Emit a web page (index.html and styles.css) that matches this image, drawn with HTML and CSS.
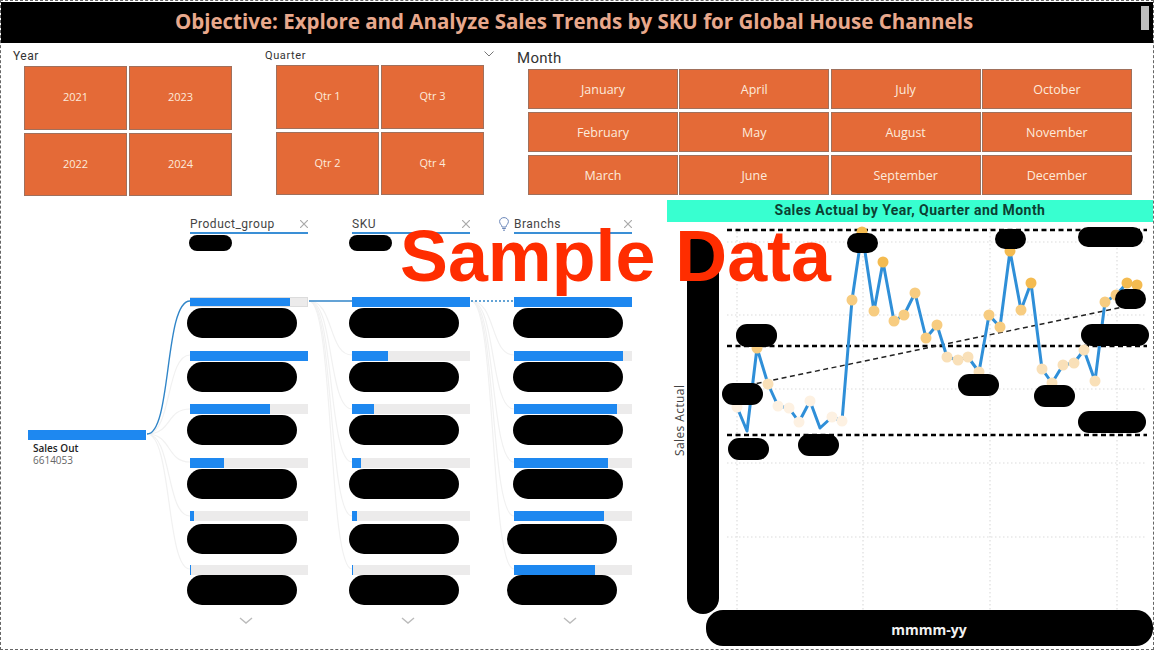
FILE: index.html
```html
<!DOCTYPE html>
<html lang="en">
<head>
<meta charset="UTF-8">
<meta name="viewport" content="width=device-width, initial-scale=1.0">
<title>Sales Trends by SKU</title>
<link rel="stylesheet" href="styles.css">
</head>
<body>
    <div class="report">
        <div class="header">
            <h1>Objective: Explore and Analyze Sales Trends by SKU for Global House Channels</h1>
            <div class="scrollThumb"></div>
        </div>

        <div class="slicers">
            <div class="slicer slicerYear">
                <div class="slicerLabel">Year</div>
                <div class="tiles tilesSquare">
                    <div class="tile">2021</div>
                    <div class="tile">2023</div>
                    <div class="tile">2022</div>
                    <div class="tile">2024</div>
                </div>
            </div>
            <div class="slicer slicerQuarter">
                <div class="slicerLabel">
                    Quarter
                    <svg class="labelChevron" width="10" height="6" viewBox="0 0 10 6"><path d="M0.5 0.5 L5 5 L9.5 0.5"/></svg>
                </div>
                <div class="tiles tilesSquare">
                    <div class="tile">Qtr 1</div>
                    <div class="tile">Qtr 3</div>
                    <div class="tile">Qtr 2</div>
                    <div class="tile">Qtr 4</div>
                </div>
            </div>
            <div class="slicer slicerMonth">
                <div class="slicerLabel">Month</div>
                <div class="tiles tilesMonth">
                    <div class="tile">January</div>
                    <div class="tile">April</div>
                    <div class="tile">July</div>
                    <div class="tile">October</div>
                    <div class="tile">February</div>
                    <div class="tile">May</div>
                    <div class="tile">August</div>
                    <div class="tile">November</div>
                    <div class="tile">March</div>
                    <div class="tile">June</div>
                    <div class="tile">September</div>
                    <div class="tile">December</div>
                </div>
            </div>
        </div>

        <div class="lower">
            <div class="tree">
                <svg class="links" width="666" height="449" viewBox="1 200 666 449">
                    <path class="linkFaint" d="M147 434 C172 434 166 355 190 355"/>
                    <path class="linkFaint" d="M147 434 C172 434 166 409 190 409"/>
                    <path class="linkFaint" d="M147 434 C172 434 166 462 190 462"/>
                    <path class="linkFaint" d="M147 434 C172 434 166 516 190 516"/>
                    <path class="linkFaint" d="M147 434 C172 434 166 569 190 569"/>
                    <path class="linkFaint" d="M309 301 C334 301 328 355 352 355"/>
                    <path class="linkFaint" d="M309 301 C334 301 328 409 352 409"/>
                    <path class="linkFaint" d="M309 301 C334 301 328 462 352 462"/>
                    <path class="linkFaint" d="M309 301 C334 301 328 516 352 516"/>
                    <path class="linkFaint" d="M309 301 C334 301 328 569 352 569"/>
                    <path class="linkFaint" d="M471 301 C496 301 490 355 514 355"/>
                    <path class="linkFaint" d="M471 301 C496 301 490 409 514 409"/>
                    <path class="linkFaint" d="M471 301 C496 301 490 462 514 462"/>
                    <path class="linkFaint" d="M471 301 C496 301 490 516 514 516"/>
                    <path class="linkFaint" d="M471 301 C496 301 490 569 514 569"/>
                    <path class="linkActive" d="M147 434 C172 434 164 301 190 301"/>
                    <path class="linkActive" d="M309 301 L352 301"/>
                    <path class="linkDotted" d="M471 301 L514 301"/>
                </svg>

                <div class="rootNode">
                    <div class="bar"><div class="fill" style="width: 100%"></div></div>
                    <div class="rootName">Sales Out</div>
                    <div class="rootValue">6614053</div>
                </div>

                <div class="level">
                    <div class="levelHead">
                        <span>Product_group</span>
                        <svg class="close" width="8" height="8" viewBox="0 0 8 8"><path d="M0 0 L8 8 M8 0 L0 8"/></svg>
                    </div>
                    <div class="blot blotHead"></div>
                    <div class="nodes">
                        <div class="node"><div class="bar barPicked"><div class="fill" style="width: 86%"></div></div><div class="blot"></div></div>
                        <div class="node"><div class="bar"><div class="fill" style="width: 100%"></div></div><div class="blot"></div></div>
                        <div class="node"><div class="bar"><div class="fill" style="width: 68%"></div></div><div class="blot"></div></div>
                        <div class="node"><div class="bar"><div class="fill" style="width: 29%"></div></div><div class="blot"></div></div>
                        <div class="node"><div class="bar"><div class="fill" style="width: 3%"></div></div><div class="blot blotLow"></div></div>
                        <div class="node"><div class="bar"><div class="fill" style="width: 1%"></div></div><div class="blot blotHigh"></div></div>
                    </div>
                    <svg class="more" width="14" height="7" viewBox="0 0 14 7"><path d="M1 1 L7 6 L13 1"/></svg>
                </div>

                <div class="level">
                    <div class="levelHead">
                        <span>SKU</span>
                        <svg class="close" width="8" height="8" viewBox="0 0 8 8"><path d="M0 0 L8 8 M8 0 L0 8"/></svg>
                    </div>
                    <div class="blot blotHead"></div>
                    <div class="nodes">
                        <div class="node"><div class="bar"><div class="fill" style="width: 100%"></div></div><div class="blot"></div></div>
                        <div class="node"><div class="bar"><div class="fill" style="width: 31%"></div></div><div class="blot"></div></div>
                        <div class="node"><div class="bar"><div class="fill" style="width: 19%"></div></div><div class="blot"></div></div>
                        <div class="node"><div class="bar"><div class="fill" style="width: 8%"></div></div><div class="blot"></div></div>
                        <div class="node"><div class="bar"><div class="fill" style="width: 4%"></div></div><div class="blot blotLow"></div></div>
                        <div class="node"><div class="bar"><div class="fill" style="width: 1%"></div></div><div class="blot blotHigh"></div></div>
                    </div>
                    <svg class="more" width="14" height="7" viewBox="0 0 14 7"><path d="M1 1 L7 6 L13 1"/></svg>
                </div>

                <div class="level levelBranch">
                    <div class="levelHead">
                        <svg class="bulb" width="10" height="14" viewBox="0 0 10 14"><path d="M3 10 C3 8 0.6 7 0.6 4.5 C0.6 2.2 2.6 0.6 5 0.6 C7.4 0.6 9.4 2.2 9.4 4.5 C9.4 7 7 8 7 10 Z M3.2 11.5 L6.8 11.5 M4 13.2 L6 13.2"/></svg>
                        <span>Branchs</span>
                        <svg class="close" width="8" height="8" viewBox="0 0 8 8"><path d="M0 0 L8 8 M8 0 L0 8"/></svg>
                    </div>
                    <div class="blot blotHead blotHidden"></div>
                    <div class="nodes">
                        <div class="node"><div class="bar"><div class="fill" style="width: 100%"></div></div><div class="blot"></div></div>
                        <div class="node"><div class="bar"><div class="fill" style="width: 92.5%"></div></div><div class="blot"></div></div>
                        <div class="node"><div class="bar"><div class="fill" style="width: 88%"></div></div><div class="blot"></div></div>
                        <div class="node"><div class="bar"><div class="fill" style="width: 80%"></div></div><div class="blot"></div></div>
                        <div class="node"><div class="bar"><div class="fill" style="width: 76.5%"></div></div><div class="blot blotLow blotLeft"></div></div>
                        <div class="node"><div class="bar"><div class="fill" style="width: 69%"></div></div><div class="blot blotHigh blotLeft"></div></div>
                    </div>
                    <svg class="more" width="14" height="7" viewBox="0 0 14 7"><path d="M1 1 L7 6 L13 1"/></svg>
                </div>
            </div>

            <div class="chart">
                <h2>Sales Actual by Year, Quarter and Month</h2>
                <svg class="plot" width="486" height="427" viewBox="667 222 486 427">
                    <path class="grid" d="M727 242 H1147 M727 315 H1147 M727 389 H1147 M727 463 H1147 M727 537 H1147"/>
                    <path class="grid" d="M737 228 V610 M863 228 V610 M990 228 V610 M1117 228 V610"/>

                    <path class="refLine" d="M727 230 H1147 M727 346 H1147 M727 435 H1147"/>
                    <path class="trend" d="M740 387 L1147 302"/>

                    <polyline class="series" points="737,407 747,431 757,348 768,384 778,406 789,408 799,422 810,401 820,428 832,417 842,421 852,300 862,232 874,311 883,262 894,321 904,315 915,293 926,338 937,325 947,357 958,360 968,357 979,372 989,315 1000,327 1010,251 1021,310 1031,283 1042,369 1052,383 1063,365 1074,363 1084,350 1095,381 1105,302 1116,295 1127,283 1137,285"/>

                    <g class="dotsLow">
                        <circle cx="737" cy="407" r="5.5"/><circle cx="778" cy="406" r="5.5"/><circle cx="789" cy="408" r="5.5"/><circle cx="799" cy="422" r="5.5"/><circle cx="810" cy="401" r="5.5"/><circle cx="832" cy="417" r="5.5"/><circle cx="842" cy="421" r="5.5"/>
                    </g>
                    <g class="dotsPale">
                        <circle cx="768" cy="384" r="5.5"/><circle cx="947" cy="357" r="5.5"/><circle cx="958" cy="360" r="5.5"/><circle cx="968" cy="357" r="5.5"/><circle cx="979" cy="372" r="5.5"/><circle cx="1042" cy="369" r="5.5"/><circle cx="1052" cy="383" r="5.5"/><circle cx="1063" cy="365" r="5.5"/><circle cx="1074" cy="363" r="5.5"/><circle cx="1084" cy="350" r="5.5"/><circle cx="1095" cy="381" r="5.5"/>
                    </g>
                    <g class="dotsMid">
                        <circle cx="852" cy="300" r="5.5"/><circle cx="874" cy="311" r="5.5"/><circle cx="894" cy="321" r="5.5"/><circle cx="904" cy="315" r="5.5"/><circle cx="915" cy="293" r="5.5"/><circle cx="926" cy="338" r="5.5"/><circle cx="937" cy="325" r="5.5"/><circle cx="989" cy="315" r="5.5"/><circle cx="1000" cy="327" r="5.5"/><circle cx="1021" cy="310" r="5.5"/><circle cx="1105" cy="302" r="5.5"/><circle cx="1116" cy="295" r="5.5"/><circle cx="757" cy="348" r="5.5"/>
                    </g>
                    <g class="dotsHigh">
                        <circle cx="862" cy="232" r="5.5"/><circle cx="883" cy="262" r="5.5"/><circle cx="1010" cy="251" r="5.5"/><circle cx="1031" cy="283" r="5.5"/><circle cx="1127" cy="283" r="5.5"/><circle cx="1137" cy="285" r="5.5"/>
                    </g>

                    <text class="axisTitle" transform="translate(684 456) rotate(-90)">Sales Actual</text>

                    <g class="redacted">
                        <rect x="687" y="233" width="32" height="381" rx="16"/>
                        <rect x="706" y="610" width="447" height="36" rx="17"/>
                        <rect x="736" y="324" width="41" height="23" rx="11"/>
                        <rect x="722" y="383" width="41" height="22" rx="11"/>
                        <rect x="847" y="233" width="31" height="20" rx="10"/>
                        <rect x="995" y="229" width="31" height="20" rx="10"/>
                        <rect x="1078" y="227" width="65" height="20" rx="10"/>
                        <rect x="1115" y="289" width="31" height="20" rx="10"/>
                        <rect x="1081" y="324" width="68" height="22" rx="11"/>
                        <rect x="958" y="374" width="41" height="22" rx="11"/>
                        <rect x="1034" y="385" width="41" height="22" rx="11"/>
                        <rect x="1078" y="411" width="68" height="22" rx="11"/>
                        <rect x="728" y="438" width="41" height="22" rx="11"/>
                        <rect x="798" y="434" width="41" height="22" rx="11"/>
                    </g>

                    <text class="axisName" x="929" y="635">mmmm-yy</text>
                </svg>
            </div>
        </div>

        <div class="watermark">Sample Data</div>
    </div>
</body>
</html>
```

FILE: styles.css
```css
body {
    font-family: "Open Sans", sans-serif;
    background-color: #fff;
    margin: 0;
    padding: 0;
}

.report {
    position: relative;
    box-sizing: border-box;
    width: 1154px;
    height: 650px;
    padding-top: 1px;
    border: 1px dashed #666;
    overflow: hidden;
}

/* header */
.header {
    position: relative;
    box-sizing: border-box;
    height: 41px;
    padding: 0 6px 4px 0;
    background-color: #000;
    display: flex;
    align-items: center;
    justify-content: center;
}

h1 {
    margin: 0;
    font-size: 20.5px;
    font-weight: 700;
    color: #e8a88c;
}

.scrollThumb {
    position: absolute;
    left: 1140px;
    top: 4px;
    width: 8px;
    height: 24px;
    background-color: #bdbdbd;
}

/* slicers */
.slicers {
    display: flex;
    height: 157px;
}

.slicerLabel {
    font-family: Roboto, sans-serif;
    color: #333;
    display: flex;
    justify-content: space-between;
    align-items: center;
}

.slicerYear {
    width: 219px;
    margin-left: 12px;
    padding-top: 6px;
}

.slicerYear .slicerLabel {
    height: 14px;
    margin-bottom: 3px;
    font-size: 12px;
    letter-spacing: 0.5px;
}

.slicerQuarter {
    width: 229px;
    margin-left: 33px;
    padding-top: 5px;
}

.slicerQuarter .slicerLabel {
    height: 14px;
    margin-bottom: 3px;
    font-size: 11px;
    letter-spacing: 0.6px;
}

.labelChevron {
    margin-top: -3px;
}

.labelChevron path {
    fill: none;
    stroke: #777;
    stroke-width: 1;
}

.slicerMonth {
    margin-left: 23px;
    padding-top: 7px;
}

.slicerMonth .slicerLabel {
    height: 16px;
    margin-bottom: 3px;
    font-size: 15px;
    letter-spacing: 0.3px;
}

.tiles {
    display: grid;
    margin-left: 11px;
}

.tilesSquare {
    grid-template-columns: 103px 103px;
    grid-auto-rows: 63.5px;
    column-gap: 2px;
    row-gap: 3px;
}

.tilesMonth {
    grid-template-columns: repeat(4, 150px);
    grid-auto-rows: 39.5px;
    column-gap: 1.3px;
    row-gap: 3.5px;
}

.tile {
    box-sizing: border-box;
    background-color: #e46a37;
    border: 1px solid #a0705c;
    color: #fdeadc;
    font-size: 11px;
    padding-bottom: 2px;
    display: flex;
    align-items: center;
    justify-content: center;
}

.tilesMonth .tile {
    font-size: 12.5px;
    padding: 2px 0 0;
}

/* decomposition tree */
.lower {
    display: flex;
    height: 448px;
}

.tree {
    position: relative;
    display: flex;
    gap: 44.5px;
    width: 666px;
    flex-shrink: 0;
    box-sizing: border-box;
    padding-left: 27px;
}

.links {
    position: absolute;
    left: 0;
    top: 0;
}

.linkFaint {
    fill: none;
    stroke: #f1f1f1;
    stroke-width: 1.2;
}

.linkActive {
    fill: none;
    stroke: #3085c8;
    stroke-width: 1.4;
}

.linkDotted {
    fill: none;
    stroke: #3085c8;
    stroke-width: 1.4;
    stroke-dasharray: 2 2;
}

.rootNode {
    position: relative;
    width: 118px;
    padding-top: 230px;
    margin-right: -0.5px;
}

.rootName {
    margin: 2px 0 0 5px;
    font-size: 10px;
    line-height: 13px;
    font-weight: 600;
    color: #222;
}

.rootValue {
    margin-left: 5px;
    font-size: 10px;
    line-height: 11px;
    color: #666;
}

.level {
    position: relative;
    width: 117.5px;
    padding-top: 16px;
}

.levelHead {
    position: relative;
    display: flex;
    justify-content: space-between;
    align-items: center;
    height: 16px;
    border-bottom: 2px solid #3a8fd6;
    font-family: Roboto, sans-serif;
    font-size: 12px;
    letter-spacing: 0.5px;
    color: #444;
}

.close path {
    fill: none;
    stroke: #aaa;
    stroke-width: 1.2;
}

.bulb {
    position: absolute;
    left: -15px;
    top: 1px;
}

.bulb path {
    fill: none;
    stroke: #6a86b8;
    stroke-width: 1;
}

.nodes {
    margin-top: 46px;
}

.node {
    height: 53.5px;
}

.bar {
    height: 10px;
    background-color: #ecebeb;
}

.barPicked {
    box-sizing: border-box;
    border: 1px solid #dcdcdc;
    border-left: none;
}

.fill {
    height: 100%;
    background-color: #1e88f0;
}

.blot {
    width: 110px;
    height: 30px;
    margin: 1px 0 0 -3px;
    border-radius: 15px;
    background-color: #000;
}

.blotHead {
    width: 43px;
    height: 16px;
    margin: 1px 0 0 -1px;
    border-radius: 8px;
}

.level:nth-of-type(3) .blotHead {
    margin-left: -3px;
}

.blotHidden {
    visibility: hidden;
}

.levelBranch .blot {
    margin-left: -1px;
}

.levelBranch .blotLeft {
    margin-left: -7px;
}

.levelBranch .blotHead {
    margin-left: -1px;
}

.blot.blotLow {
    margin-top: 3px;
}

.blot.blotHigh {
    margin-top: 0;
}

.more {
    display: block;
    margin: -1px 0 0 49px;
}

.more path {
    fill: none;
    stroke: #bbb;
    stroke-width: 1.4;
}

/* line chart */
.chart {
    flex: 1;
    position: relative;
    z-index: 1;
}

h2 {
    margin: 0;
    height: 22px;
    line-height: 21px;
    background-color: #38ffd0;
    font-family: Roboto, sans-serif;
    font-size: 14px;
    font-weight: 700;
    letter-spacing: 0.45px;
    color: #0c3f33;
    text-align: center;
}

.plot {
    display: block;
}

.grid {
    fill: none;
    stroke: #dcdcdc;
    stroke-width: 1.2;
    stroke-dasharray: 1.5 2.5;
}

.refLine {
    fill: none;
    stroke: #000;
    stroke-width: 2.5;
    stroke-dasharray: 5 3.5;
}

.trend {
    fill: none;
    stroke: #222;
    stroke-width: 1.5;
    stroke-dasharray: 5 3.5;
}

.series {
    fill: none;
    stroke: #2f8fd8;
    stroke-width: 3;
    stroke-linejoin: round;
}

.dotsLow { fill: #fdf1e2; }
.dotsPale { fill: #f9e0b8; }
.dotsMid { fill: #f7cc80; }
.dotsHigh { fill: #f4bb50; }

.axisTitle {
    font-size: 12px;
    letter-spacing: 0.4px;
    fill: #444;
}

.axisName {
    font-size: 14px;
    font-weight: 700;
    fill: #f2f2f2;
    text-anchor: middle;
}

.redacted {
    fill: #000;
}

.watermark {
    position: absolute;
    left: 399px;
    top: 230px;
    z-index: 2;
    font-family: "Liberation Sans", sans-serif;
    font-size: 71.8px;
    font-weight: 700;
    line-height: 50px;
    white-space: nowrap;
    color: #ff2d00;
}
```
